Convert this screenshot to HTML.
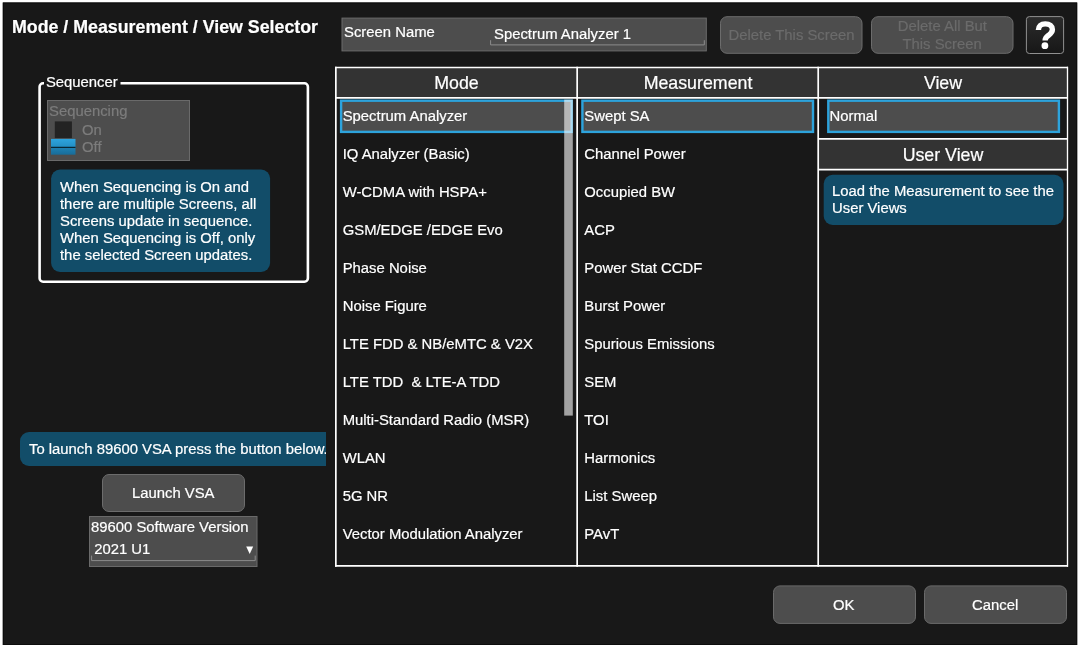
<!DOCTYPE html>
<html>
<head>
<meta charset="utf-8">
<title>Mode / Measurement / View Selector</title>
<style>
html,body{margin:0;padding:0;}
body{width:1080px;height:648px;background:#fff;overflow:hidden;position:relative;font-family:"Liberation Sans",sans-serif;color:#fff;}
#shapes{position:absolute;left:0;top:0;width:1080px;height:648px;display:block;}
#text{position:absolute;left:0;top:0;width:1080px;height:648px;will-change:transform;overflow:hidden;}
.t{position:absolute;white-space:nowrap;line-height:1;color:#fff;-webkit-text-stroke:0.2px currentColor;}
#tipclip{position:absolute;left:0;top:430px;width:326px;height:40px;overflow:hidden;}
</style>
</head>
<body>
<svg id="shapes" width="1080" height="648" viewBox="0 0 1080 648">
<rect x="2.8" y="2.5" width="1074.4" height="642.5" fill="#181818"/>
<rect x="3.3" y="3" width="1073.4" height="641.5" fill="none" stroke="#0d0d0d" stroke-width="1"/>
<rect x="342" y="18.1" width="364.3" height="32.8" fill="#4d4d4d" stroke="#6c6c6c" stroke-width="1"/>
<path d="M490.6 40.2 V44.9 H704.3 V40.2" fill="none" stroke="#8c8c8c" stroke-width="1"/>
<rect x="720.5" y="16.7" width="141.5" height="36.6" rx="6.5" fill="#4d4d4d" stroke="#6c6c6c" stroke-width="1"/>
<rect x="871.5" y="16.7" width="141.5" height="36.6" rx="6.5" fill="#4d4d4d" stroke="#6c6c6c" stroke-width="1"/>
<defs><linearGradient id="hg" x1="0" y1="0" x2="0" y2="1"><stop offset="0" stop-color="#2c2c2c"/><stop offset="1" stop-color="#171717"/></linearGradient><linearGradient id="sw" x1="0" y1="0" x2="0" y2="1"><stop offset="0" stop-color="#2ea4de"/><stop offset="0.5" stop-color="#2390c6"/><stop offset="0.5" stop-color="#1f83b6"/><stop offset="1" stop-color="#186c98"/></linearGradient></defs>
<rect x="1026.4" y="16.6" width="37.2" height="36.9" rx="3" fill="url(#hg)" stroke="#909090" stroke-width="1"/>
<path d="M1038.4 30 C1038.4 26 1041 23.9 1045.3 23.9 C1049.6 23.9 1052.4 26.2 1052.4 29.6 C1052.4 32.4 1050.6 33.8 1048.6 35.3 C1046.2 37 1045.1 38.2 1045.1 40.6" fill="none" stroke="#fff" stroke-width="5.4" stroke-linecap="butt"/>
<circle cx="1044.9" cy="45.7" r="3.4" fill="#fff"/>
<rect x="39.6" y="83.3" width="268.3" height="198.4" rx="3.5" fill="none" stroke="#fff" stroke-width="2.6"/>
<rect x="44" y="78" width="76.5" height="10" fill="#181818"/>
<rect x="47.5" y="100.5" width="142" height="60" fill="#4d4d4d" stroke="#6a6a6a" stroke-width="1"/>
<rect x="54.8" y="121.4" width="17.1" height="16.7" fill="#232323"/>
<rect x="51" y="138.9" width="24.5" height="15.8" fill="url(#sw)"/>
<rect x="51" y="146.8" width="24.5" height="1.05" fill="#061820"/>
<rect x="51.1" y="169.6" width="219" height="102.4" rx="9" fill="#124d69"/>
<path d="M326 432 H29 A9 9 0 0 0 20 441 V457 A9 9 0 0 0 29 466 H326 Z" fill="#124d69"/>
<rect x="823.7" y="174.8" width="239.8" height="50.2" rx="9" fill="#124d69"/>
<rect x="102.5" y="474.5" width="142" height="37" rx="6.5" fill="#4d4d4d" stroke="#6c6c6c" stroke-width="1"/>
<rect x="89.5" y="516.5" width="167.5" height="50" fill="#4d4d4d" stroke="#6a6a6a" stroke-width="1"/>
<path d="M91.6 555.6 V560.6 H255.2 V555.6" fill="none" stroke="#8c8c8c" stroke-width="1"/>
<path d="M246.2 546.4 H253.2 L249.7 554 Z" fill="#fff"/>
<rect x="336" y="68" width="731" height="30" fill="#333"/>
<rect x="819" y="139.5" width="248" height="30" fill="#333"/>
<line x1="335" y1="67.5" x2="1068" y2="67.5" stroke="#fff" stroke-width="1.7"/>
<line x1="335" y1="97.9" x2="1068" y2="97.9" stroke="#fff" stroke-width="1.7"/>
<line x1="335" y1="565.9" x2="1068" y2="565.9" stroke="#fff" stroke-width="1.7"/>
<line x1="335.85" y1="66.7" x2="335.85" y2="566.7" stroke="#fff" stroke-width="1.7"/>
<line x1="1067.5" y1="66.7" x2="1067.5" y2="566.7" stroke="#fff" stroke-width="1.35"/>
<line x1="577.15" y1="66.7" x2="577.15" y2="566.7" stroke="#fff" stroke-width="1.7"/>
<line x1="818.2" y1="66.7" x2="818.2" y2="566.7" stroke="#fff" stroke-width="1.7"/>
<line x1="818" y1="138.8" x2="1068" y2="138.8" stroke="#fff" stroke-width="1.7"/>
<line x1="818" y1="169.7" x2="1068" y2="169.7" stroke="#fff" stroke-width="1.7"/>
<rect x="341.10" y="100.70" width="230.60" height="31.20" fill="#4d4d4d" stroke="#2da3dc" stroke-width="2.4"/>
<rect x="582.40" y="100.70" width="230.60" height="31.20" fill="#4d4d4d" stroke="#2da3dc" stroke-width="2.4"/>
<rect x="828.30" y="100.70" width="230.60" height="31.20" fill="#4d4d4d" stroke="#2da3dc" stroke-width="2.4"/>
<rect x="564.2" y="99.6" width="8.6" height="316" fill="#fff" fill-opacity="0.6"/>
<rect x="773.5" y="585.9" width="142" height="37.5" rx="6.5" fill="#4d4d4d" stroke="#6a6a6a" stroke-width="1"/>
<rect x="924.5" y="585.9" width="142" height="37.5" rx="6.5" fill="#4d4d4d" stroke="#6a6a6a" stroke-width="1"/>
</svg>
<div id="text">
<div id="title" class="t" style="left:12px;top:19px;font-size:17.8px;font-weight:bold;">Mode / Measurement / View Selector</div>
<div id="snlab" class="t" style="left:344px;top:24.5px;font-size:14.85px;">Screen Name</div>
<div id="snval" class="t" style="left:494px;top:26.5px;font-size:14.85px;">Spectrum Analyzer 1</div>
<div id="b1t" class="t" style="left:728.5px;top:28px;font-size:14.85px;color:#6b6b6b;">Delete This Screen</div>
<div id="b2a" class="t" style="left:897.8px;top:19px;font-size:14.85px;color:#6b6b6b;">Delete All But</div>
<div id="b2b" class="t" style="left:902.5px;top:37px;font-size:14.85px;color:#6b6b6b;">This Screen</div>
<div id="grpt" class="t" style="left:45.9px;top:74.5px;font-size:14.85px;">Sequencer</div>
<div id="seqt" class="t" style="left:49px;top:104px;font-size:14.85px;color:#7c7c7c;">Sequencing</div>
<div id="ont" class="t" style="left:82px;top:122.5px;font-size:14.85px;color:#7c7c7c;">On</div>
<div id="offt" class="t" style="left:82px;top:139.5px;font-size:14.85px;color:#7c7c7c;">Off</div>
<div id="tip1t" class="t" style="left:60px;top:178.5px;font-size:14.85px;line-height:17.15px;white-space:pre;">When Sequencing is On and
there are multiple Screens, all
Screens update in sequence.
When Sequencing is Off, only
the selected Screen updates.</div>
<div style="position:absolute;left:0;top:430px;width:326px;height:40px;overflow:hidden;"><div id="tip2t" class="t" style="left:29px;top:12px;font-size:14.85px;">To launch 89600 VSA press the button below.</div></div>
<div id="lvt" class="t" style="left:132px;top:486px;font-size:14.85px;">Launch VSA</div>
<div id="vert" class="t" style="left:91px;top:520px;font-size:14.85px;">89600 Software Version</div>
<div id="verv" class="t" style="left:94.2px;top:542px;font-size:14.85px;">2021 U1</div>
<div id="h1" class="t" style="left:337px;top:75px;width:239px;text-align:center;font-size:17.8px;">Mode</div>
<div id="h2" class="t" style="left:578px;top:75px;width:240px;text-align:center;font-size:17.8px;">Measurement</div>
<div id="h3" class="t" style="left:819px;top:75px;width:248px;text-align:center;font-size:17.8px;">View</div>
<div id="h4" class="t" style="left:819px;top:147px;width:248px;text-align:center;font-size:17.8px;">User View</div>
<div id="m1" class="t" style="left:342.7px;top:109px;font-size:14.85px;white-space:pre;">Spectrum Analyzer</div>
<div id="m2" class="t" style="left:342.7px;top:147px;font-size:14.85px;white-space:pre;">IQ Analyzer (Basic)</div>
<div id="m3" class="t" style="left:342.7px;top:185px;font-size:14.85px;white-space:pre;">W-CDMA with HSPA+</div>
<div id="m4" class="t" style="left:342.7px;top:223px;font-size:14.85px;white-space:pre;">GSM/EDGE /EDGE Evo</div>
<div id="m5" class="t" style="left:342.7px;top:261px;font-size:14.85px;white-space:pre;">Phase Noise</div>
<div id="m6" class="t" style="left:342.7px;top:299px;font-size:14.85px;white-space:pre;">Noise Figure</div>
<div id="m7" class="t" style="left:342.7px;top:337px;font-size:14.85px;white-space:pre;">LTE FDD &amp; NB/eMTC &amp; V2X</div>
<div id="m8" class="t" style="left:342.7px;top:375px;font-size:14.85px;white-space:pre;">LTE TDD  &amp; LTE-A TDD</div>
<div id="m9" class="t" style="left:342.7px;top:413px;font-size:14.85px;white-space:pre;">Multi-Standard Radio (MSR)</div>
<div id="m10" class="t" style="left:342.7px;top:451px;font-size:14.85px;white-space:pre;">WLAN</div>
<div id="m11" class="t" style="left:342.7px;top:489px;font-size:14.85px;white-space:pre;">5G NR</div>
<div id="m12" class="t" style="left:342.7px;top:527px;font-size:14.85px;white-space:pre;">Vector Modulation Analyzer</div>
<div id="e1" class="t" style="left:584.3px;top:109px;font-size:14.85px;">Swept SA</div>
<div id="e2" class="t" style="left:584.3px;top:147px;font-size:14.85px;">Channel Power</div>
<div id="e3" class="t" style="left:584.3px;top:185px;font-size:14.85px;">Occupied BW</div>
<div id="e4" class="t" style="left:584.3px;top:223px;font-size:14.85px;">ACP</div>
<div id="e5" class="t" style="left:584.3px;top:261px;font-size:14.85px;">Power Stat CCDF</div>
<div id="e6" class="t" style="left:584.3px;top:299px;font-size:14.85px;">Burst Power</div>
<div id="e7" class="t" style="left:584.3px;top:337px;font-size:14.85px;">Spurious Emissions</div>
<div id="e8" class="t" style="left:584.3px;top:375px;font-size:14.85px;">SEM</div>
<div id="e9" class="t" style="left:584.3px;top:413px;font-size:14.85px;">TOI</div>
<div id="e10" class="t" style="left:584.3px;top:451px;font-size:14.85px;">Harmonics</div>
<div id="e11" class="t" style="left:584.3px;top:489px;font-size:14.85px;">List Sweep</div>
<div id="e12" class="t" style="left:584.3px;top:527px;font-size:14.85px;">PAvT</div>
<div id="v1" class="t" style="left:829.5px;top:109px;font-size:14.85px;">Normal</div>
<div id="tip3t" class="t" style="left:832px;top:182.5px;font-size:14.85px;line-height:17px;white-space:pre;">Load the Measurement to see the
User Views</div>
<div id="okt" class="t" style="left:833px;top:598px;font-size:14.85px;">OK</div>
<div id="cat" class="t" style="left:972px;top:598px;font-size:14.85px;">Cancel</div>
</div>
</body>
</html>
